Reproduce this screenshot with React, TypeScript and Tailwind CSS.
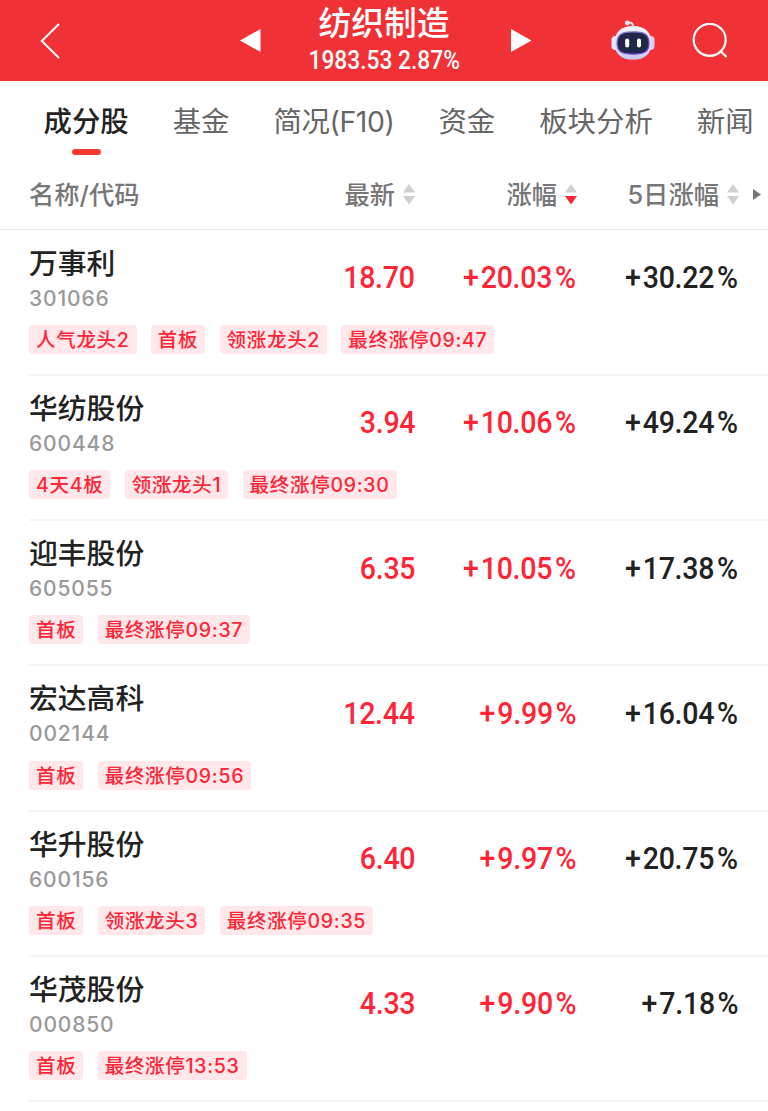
type Stock = {
  name: string;
  code: string;
  price: string;
  change: string;
  change5d: string;
  tags: string[];
};

const tabs = ["基金", "简况(F10)", "资金", "板块分析", "新闻"];

const stocks: Stock[] = [
  { name: "万事利", code: "301066", price: "18.70", change: "20.03", change5d: "30.22", tags: ["人气龙头2", "首板", "领涨龙头2", "最终涨停09:47"] },
  { name: "华纺股份", code: "600448", price: "3.94", change: "10.06", change5d: "49.24", tags: ["4天4板", "领涨龙头1", "最终涨停09:30"] },
  { name: "迎丰股份", code: "605055", price: "6.35", change: "10.05", change5d: "17.38", tags: ["首板", "最终涨停09:37"] },
  { name: "宏达高科", code: "002144", price: "12.44", change: "9.99", change5d: "16.04", tags: ["首板", "最终涨停09:56"] },
  { name: "华升股份", code: "600156", price: "6.40", change: "9.97", change5d: "20.75", tags: ["首板", "领涨龙头3", "最终涨停09:35"] },
  { name: "华茂股份", code: "000850", price: "4.33", change: "9.90", change5d: "7.18", tags: ["首板", "最终涨停13:53"] },
];

function RobotIcon() {
  return (
    <svg width="44" height="42" viewBox="0 0 44 42" fill="none">
      <defs>
        <linearGradient id="shell" x1="0" y1="0" x2="0" y2="1">
          <stop offset="0" stopColor="#f6f4ff" />
          <stop offset="0.7" stopColor="#dedaf7" />
          <stop offset="1" stopColor="#c9c5ea" />
        </linearGradient>
        <linearGradient id="rim" x1="0" y1="0" x2="1" y2="1">
          <stop offset="0" stopColor="#8792cf" />
          <stop offset="1" stopColor="#6a30dc" />
        </linearGradient>
      </defs>
      <path d="M17 2.800c3-.8 5 .3 5 3.600" stroke="#f3dfee" strokeWidth="2" />
      <circle cx="16.300" cy="3" r="2.400" fill="#f5e8f5" />
      <rect x="0.500" y="16" width="8" height="14" rx="4" fill="#e9e7fb" />
      <rect x="35.500" y="16" width="8" height="14" rx="4" fill="#d4d0f2" />
      <path d="M22 6c12 0 18.500 6.500 18.500 17S34 39.800 22 39.800 3.500 33.500 3.500 23 10 6 22 6Z" fill="url(#shell)" />
      <path d="M22 11.800c11.500 0 16 2.500 16 11.200S33.500 34.200 22 34.200 6 31.700 6 23 10.500 11.800 22 11.800Z" fill="#1f2846" stroke="url(#rim)" strokeWidth="1.200" />
      <rect x="14.200" y="18.500" width="4" height="9" rx="2" fill="#fff" />
      <rect x="26" y="18.500" width="4" height="9" rx="2" fill="#fff" />
    </svg>
  );
}

function SortIcon({ down }: { down?: boolean }) {
  return (
    <svg width="12" height="21" viewBox="0 0 12 21">
      <path d="M6 0 12 8.500H0Z" fill="#cfcfcf" />
      <path d="M0 12h12L6 20.500Z" fill={down ? "#ff2436" : "#cfcfcf"} />
    </svg>
  );
}

function Percent({ value }: { value: string }) {
  return (
    <span className="inline-block origin-right scale-x-[0.920] pr-px">
      <span className="mr-[2.500px]">+</span>
      {value}
      <span className="ml-[3px]">%</span>
    </span>
  );
}

function Header() {
  return (
    <header className="flex h-[81px] items-center bg-[#f03136] text-white">
      <svg className="ml-10 mt-px" width="21" height="36" viewBox="0 0 21 36" fill="none">
        <path d="M19 1 1.800 18 19 35" stroke="#fff" strokeWidth="2" />
      </svg>
      <svg className="ml-[179px]" width="21" height="23" viewBox="0 0 21 23">
        <path d="M0 11.500 20.500 0v23Z" fill="#fff" />
      </svg>
      <div className="flex w-[250px] flex-col items-center pr-[4px] pt-[2px]">
        <div className="h-[41px] text-[32.800px] font-medium leading-[41px]">纺织制造</div>
        <div className="h-9 scale-x-[0.910] whitespace-nowrap font-[Roboto] text-[25px] font-medium leading-[33px]">1983.53 2.87%</div>
      </div>
      <svg width="21" height="23" viewBox="0 0 21 23">
        <path d="M20.500 11.500 0 0v23Z" fill="#fff" />
      </svg>
      <div className="ml-[79px]">
        <RobotIcon />
      </div>
      <svg className="ml-[37px]" width="37" height="36" viewBox="0 0 37 36" fill="none">
        <circle cx="17.700" cy="16.800" r="16" stroke="#fff" strokeWidth="2.200" />
        <path d="m28 27.500 6.500 6.500" stroke="#fff" strokeWidth="2.200" />
      </svg>
    </header>
  );
}

function StockRow({ stock }: { stock: Stock }) {
  return (
    <div className="ml-[29px] h-[145.200px] border-b-2 border-[#f5f5f5]">
      <div className="flex h-[94.200px]">
        <div className="w-[226px] pt-[13px]">
          <div className="h-10 text-[28.800px] font-medium leading-10 text-[#222]">{stock.name}</div>
          <div className="text-[21px] font-medium leading-[29px] tracking-[0.850px] text-[#999]">{stock.code}</div>
        </div>
        <div className="flex pt-[28.500px] font-[Roboto] text-[31px] font-medium leading-[38px] tracking-[-0.300px]">
          <div className="w-[160px] text-right text-[#ff2436]">
            <span className="inline-block origin-right scale-x-[0.920]">{stock.price}</span>
          </div>
          <div className="w-[162px] text-right text-[#ff2436]">
            <Percent value={stock.change} />
          </div>
          <div className="w-[162px] text-right text-[#222]">
            <Percent value={stock.change5d} />
          </div>
        </div>
      </div>
      <div className="flex gap-[14.300px]">
        {stock.tags.map((tag) => (
          <span
            key={tag}
            className="h-[29px] whitespace-nowrap rounded-[4px] bg-[#ffe7ea] px-[7px] text-[19.500px] font-medium leading-[31px] tracking-[0.700px] text-[#ff2436]"
          >
            {tag}
          </span>
        ))}
      </div>
    </div>
  );
}

export default function App() {
  return (
    <div className="h-[1111px] w-[768px] overflow-hidden bg-white font-[Inter,'Noto_Sans_CJK_SC',sans-serif]">
      <Header />
      <nav className="flex h-[78px] gap-[44px] whitespace-nowrap pl-[43.500px] pt-[21px] text-[28.400px] leading-10 text-[#666]">
        <div className="flex flex-col items-center">
          <div className="font-medium text-[#222]">成分股</div>
          <div className="mt-[7px] h-[6px] w-[29px] rounded-full bg-[#ff3a34]" />
        </div>
        {tabs.map((tab) => (
          <div key={tab} className={tab.includes("(") ? "tracking-[-0.400px]" : ""}>
            {tab}
          </div>
        ))}
      </nav>
      <div className="flex h-[71px] items-center border-b border-[#e6e6e6] pl-[29px] text-[25.300px] font-medium text-[#777]">
        <div className="w-[226px] pt-[2px]">名称/代码</div>
        <div className="flex w-[160px] items-center justify-end gap-2">
          <span className="pt-[2px]">最新</span>
          <SortIcon />
        </div>
        <div className="flex w-[162px] items-center justify-end gap-2">
          <span className="pt-[2px]">涨幅</span>
          <SortIcon down />
        </div>
        <div className="flex w-[162px] items-center justify-end gap-2">
          <span className="pt-[2px]">5日涨幅</span>
          <SortIcon />
        </div>
        <svg className="ml-[14px]" width="8" height="11" viewBox="0 0 8 11">
          <path d="M0 0 8 5.500 0 11Z" fill="#777" />
        </svg>
      </div>
      <div className="pt-[0.800px]">
        {stocks.map((stock) => (
          <StockRow key={stock.code} stock={stock} />
        ))}
      </div>
    </div>
  );
}
